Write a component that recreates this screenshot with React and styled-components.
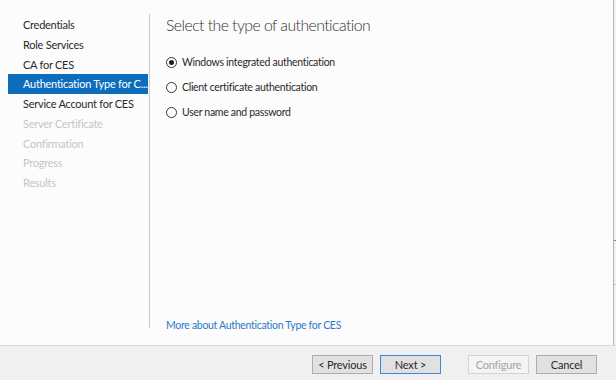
import React from 'react';
import styled, { createGlobalStyle } from 'styled-components';

const GlobalStyle = createGlobalStyle`
  html, body {
    margin: 0;
    padding: 0;
    background: #fcfcfc;
  }
`;

const steps = [
  { label: 'Credentials' },
  { label: 'Role Services' },
  { label: 'CA for CES' },
  { label: 'Authentication Type for C...', active: true },
  { label: 'Service Account for CES' },
  { label: 'Server Certificate', disabled: true },
  { label: 'Confirmation', disabled: true },
  { label: 'Progress', disabled: true },
  { label: 'Results', disabled: true },
];

const options = [
  { label: 'Windows integrated authentication', checked: true },
  { label: 'Client certificate authentication' },
  { label: 'User name and password' },
];

const Window = styled.div`
  width: 616px;
  height: 380px;
  display: flex;
  flex-direction: column;
  font-family: Lato, "Open Sans", sans-serif;
  font-size: 10.5px;
  letter-spacing: -0.3px;
  color: #2a2a2a;
  background: #fcfcfc;
`;

const Main = styled.div`
  flex: 1;
  display: flex;
  min-height: 0;
`;

const Sidebar = styled.nav`
  width: 140px;
  margin-left: 8px;
  padding-top: 15px;
  display: flex;
  flex-direction: column;
  font-size: 11px;
  letter-spacing: -0.25px;
`;

const Step = styled.div`
  height: 19.75px;
  line-height: 19.75px;
  padding-left: 15px;
  white-space: nowrap;
  overflow: hidden;
  color: ${p => (p.$active ? '#fff' : p.$disabled ? '#c6c6c6' : '#2a2a2a')};
  background: ${p => (p.$active ? '#0c6dbd' : 'transparent')};
`;

const Divider = styled.div`
  width: 1px;
  margin: 14px 0 17px 1px;
  background: #cbcbcb;
`;

const Content = styled.section`
  flex: 1;
  padding: 14px 0 0 16px;
  display: flex;
  flex-direction: column;
`;

const Title = styled.h1`
  margin: 0;
  font-size: 15.8px;
  font-weight: 300;
  line-height: 22px;
  letter-spacing: -0.55px;
  color: #333;
`;

const RadioGroup = styled.div`
  margin-top: 18px;
  display: flex;
  flex-direction: column;
  gap: 9px;
`;

const RadioRow = styled.label`
  display: flex;
  align-items: center;
  height: 16px;
  gap: 5px;
`;

const RadioCircle = styled.span`
  width: 9px;
  height: 9px;
  border: 1px solid #333;
  border-radius: 50%;
  display: flex;
  align-items: center;
  justify-content: center;
  background: #fff;

  &::after {
    content: '';
    width: 5px;
    height: 5px;
    border-radius: 50%;
    background: ${p => (p.$checked ? '#1e1e1e' : 'transparent')};
  }
`;

const Spacer = styled.div`
  flex: 1;
`;

const HelpLink = styled.a`
  color: #2a7ac7;
  text-decoration: none;
  line-height: 16px;
  margin-bottom: 12px;
`;

const ScrollEdge = styled.div`
  width: 2px;
  border-left: 1px solid #b4b4b4;
  background: #f2f2f2;
  display: flex;
  flex-direction: column;
  padding-top: 240px;
`;

const ScrollMark = styled.div`
  height: 43px;
  border-top: 1px solid #8a8a8a;
  border-bottom: 1px solid #c8c8c8;
`;

const Footer = styled.footer`
  height: 32px;
  border-top: 1px solid #dcdcdc;
  background: #f0f0f0;
  display: flex;
  align-items: center;
  padding: 2px 19px 0 0;
  justify-content: flex-end;
`;

const Button = styled.button`
  width: 61px;
  height: 19px;
  padding: 0;
  margin-left: ${p => p.$gap || 0}px;
  font-family: inherit;
  font-size: 11px;
  letter-spacing: -0.2px;
  color: ${p => (p.disabled ? '#a3a3a3' : '#2a2a2a')};
  background: ${p => (p.disabled ? '#f4f4f4' : '#e1e1e1')};
  border: 1px solid
    ${p => (p.$primary ? '#3c8ad6' : p.disabled ? '#d3d3d3' : '#adadad')};
  box-sizing: border-box;
`;

export default function App() {
  return (
    <>
      <GlobalStyle />
      <Window>
        <Main>
          <Sidebar>
            {steps.map(s => (
              <Step key={s.label} $active={s.active} $disabled={s.disabled}>
                {s.label}
              </Step>
            ))}
          </Sidebar>
          <Divider />
          <Content>
            <Title>Select the type of authentication</Title>
            <RadioGroup>
              {options.map(o => (
                <RadioRow key={o.label}>
                  <RadioCircle $checked={o.checked} />
                  {o.label}
                </RadioRow>
              ))}
            </RadioGroup>
            <Spacer />
            <HelpLink href="#">More about Authentication Type for CES</HelpLink>
          </Content>
          <ScrollEdge>
            <ScrollMark />
          </ScrollEdge>
        </Main>
        <Footer>
          <Button>&lt; Previous</Button>
          <Button $primary $gap={7}>Next &gt;</Button>
          <Button disabled $gap={27}>Configure</Button>
          <Button $gap={7}>Cancel</Button>
        </Footer>
      </Window>
    </>
  );
}
